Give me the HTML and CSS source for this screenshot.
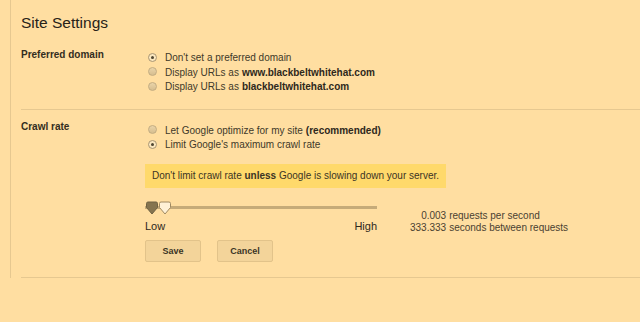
FILE: index.html
```html
<!DOCTYPE html>
<html lang="en">
<head>
    <meta charset="UTF-8">
    <title>Site Settings</title>
    <link rel="stylesheet" href="styles.css">
</head>
<body>
    <div id="panel">
        <h1 class="page-title">Site Settings</h1>

        <div class="setting">
            <div class="setting-label">Preferred domain</div>
            <div class="setting-body">
                <div class="option"><span class="radio checked"></span>Don't set a preferred domain</div>
                <div class="option"><span class="radio"></span>Display URLs as <b>www.blackbeltwhitehat.com</b></div>
                <div class="option"><span class="radio"></span>Display URLs as <b>blackbeltwhitehat.com</b></div>
            </div>
        </div>

        <div class="setting crawl">
            <div class="setting-label">Crawl rate</div>
            <div class="setting-body">
                <div class="option"><span class="radio"></span>Let Google optimize for my site <b>(recommended)</b></div>
                <div class="option"><span class="radio checked"></span>Limit Google's maximum crawl rate</div>

                <div class="notice">Don't limit crawl rate <b>unless</b> Google is slowing down your server.</div>

                <div class="rate-row">
                    <div class="slider-col">
                        <div class="slider">
                            <div class="track"></div>
                            <svg class="thumb thumb-min" width="14" height="14" viewBox="0 0 14 14">
                                <path d="M1.5 2.5 Q1.5 1 3 1 H11 Q12.5 1 12.5 2.5 V6.5 L7 13 L1.5 6.5 Z" fill="#85744f" stroke="#6f6142" stroke-width="1"/>
                            </svg>
                            <svg class="thumb thumb-max" width="14" height="14" viewBox="0 0 14 14">
                                <path d="M1.5 2.5 Q1.5 1 3 1 H11 Q12.5 1 12.5 2.5 V6.5 L7 13 L1.5 6.5 Z" fill="#fff1d6" stroke="#a08a62" stroke-width="1"/>
                            </svg>
                        </div>
                        <div class="slider-labels">
                            <span>Low</span>
                            <span>High</span>
                        </div>
                        <div class="actions">
                            <button class="btn">Save</button>
                            <button class="btn">Cancel</button>
                        </div>
                    </div>

                    <table class="rate-info">
                        <tr><td class="num">0.003</td><td>requests per second</td></tr>
                        <tr><td class="num">333.333</td><td>seconds between requests</td></tr>
                    </table>
                </div>
            </div>
        </div>
    </div>
</body>
</html>
```

FILE: styles.css
```css
body {
    margin: 0;
    padding: 0;
    background: #ffdea1;
    font-family: "Liberation Sans", Arial, sans-serif;
    color: #3b3425;
    height: 322px;
    overflow: hidden;
}

#panel {
    margin-left: 10px;
    border-left: 1px solid #e6c890;
    padding-left: 10px;
}

.page-title {
    margin: 0;
    padding-top: 13px;
    font-size: 15.5px;
    line-height: 20px;
    font-weight: normal;
    color: #272218;
}

.setting {
    display: flex;
    padding: 15px 0 14.5px;
    border-bottom: 1px solid #e6c890;
}

.setting.crawl {
    padding: 10px 0 15.5px;
}

.setting-label {
    width: 124px;
    font-size: 10px;
    line-height: 14.5px;
    font-weight: bold;
    color: #332d20;
}

.setting-body {
    padding-top: 3px;
    font-size: 10px;
}

.crawl .setting-body {
    padding-top: 3.5px;
}

.option {
    display: flex;
    align-items: center;
    line-height: 14.5px;
    color: #413929;
}

.option b {
    margin-left: 3px;
    color: #2e281c;
}

.radio {
    width: 7px;
    height: 7px;
    margin: 0 8px 2px 3px;
    border: 1px solid #c2ac82;
    border-radius: 50%;
    background: linear-gradient(#ead4a8, #d6be90);
    position: relative;
}

.radio.checked {
    background: #fbe7bf;
    border-color: #a99672;
}

.radio.checked::after {
    content: '';
    position: absolute;
    left: 2px;
    top: 2px;
    width: 3px;
    height: 3px;
    border-radius: 50%;
    background: #4f4632;
}

.notice {
    display: inline-block;
    margin-top: 11px;
    padding: 0 7px;
    height: 24px;
    line-height: 24px;
    background: #ffd96b;
    color: #3b3425;
}

.rate-row {
    display: flex;
    margin-top: 13px;
}

.slider-col {
    width: 232px;
}

.slider {
    position: relative;
    height: 13px;
}

.track {
    position: absolute;
    left: 0;
    right: 0;
    top: 5px;
    height: 3px;
    background: #c6ab79;
}

.thumb {
    position: absolute;
    top: 0;
}

.thumb-min {
    left: 0;
}

.thumb-max {
    left: 13px;
}

.slider-labels {
    display: flex;
    justify-content: space-between;
    margin-top: 5px;
    font-size: 11px;
    line-height: 14px;
    color: #2e281c;
}

.actions {
    display: flex;
    gap: 16px;
    margin-top: 7px;
}

.btn {
    width: 56px;
    height: 22px;
    padding: 0;
    background: #f3d49a;
    border: 1px solid #e2c38a;
    border-radius: 2px;
    font-family: "Liberation Sans", Arial, sans-serif;
    font-size: 9px;
    font-weight: bold;
    color: #3b3425;
}

.rate-info {
    margin-left: 33px;
    margin-top: 9px;
    align-self: flex-start;
    border-collapse: collapse;
    font-size: 10px;
    line-height: 12.5px;
    color: #4a4131;
}

.rate-info td {
    padding: 0;
}

.rate-info .num {
    text-align: right;
    padding-right: 3px;
}
```
